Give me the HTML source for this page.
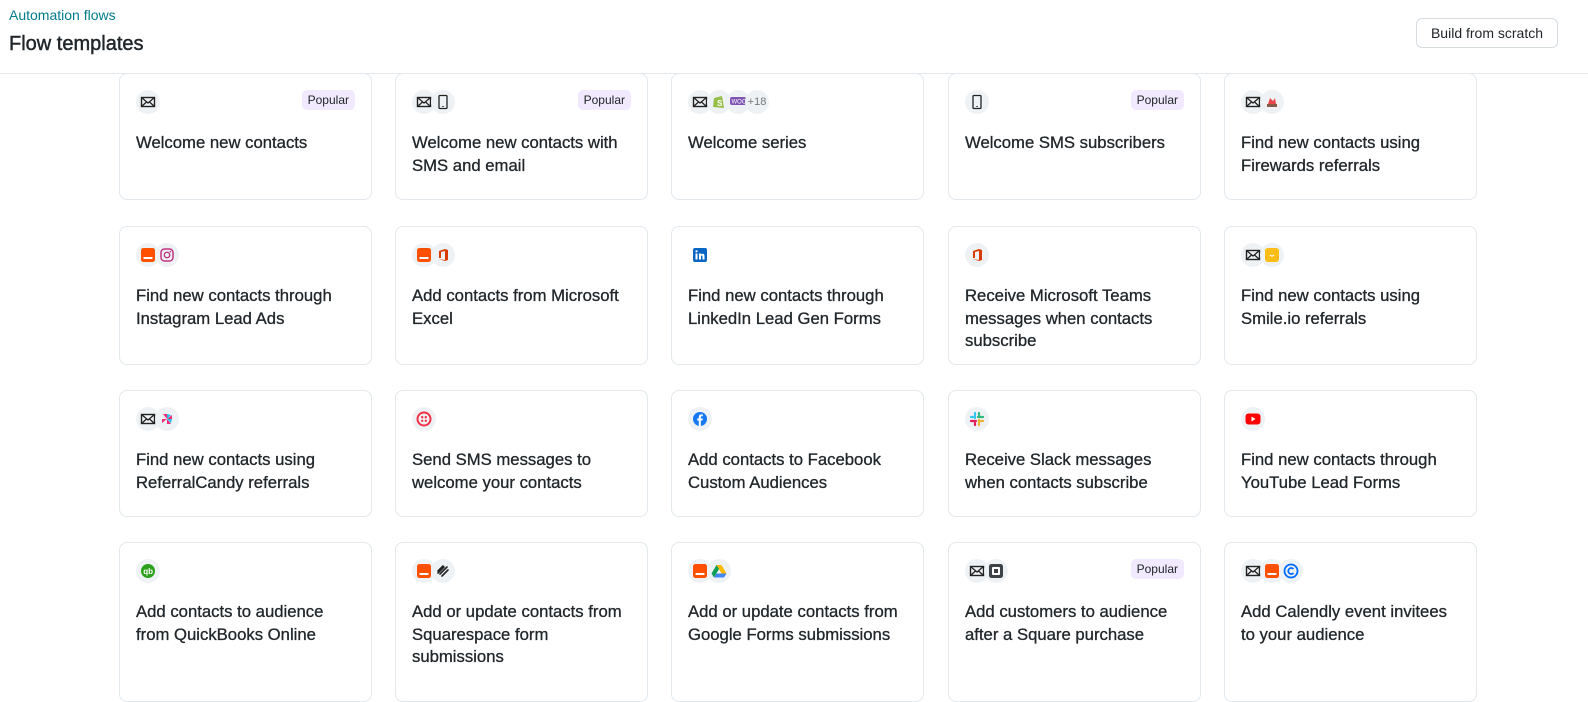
<!DOCTYPE html>
<html><head><meta charset="utf-8"><style>
*{box-sizing:border-box;margin:0;padding:0}
body{width:1588px;height:673px;overflow:hidden;background:#fff;font-family:"Liberation Sans",sans-serif;color:#21262a;position:relative}
.hdr{position:absolute;left:0;top:0;width:1588px;height:74px;border-bottom:1px solid #e3e8ec;background:#fff;z-index:2}
.crumb{position:absolute;left:9px;top:7px;font-size:14px;color:#007c89}
.h1{position:absolute;left:9px;top:33px;font-size:20px;-webkit-text-stroke:0.45px #21262a}
.btn{position:absolute;left:1416px;top:18px;width:142px;height:30px;border:1px solid #d6dce1;border-radius:6px;font-size:14px;line-height:28px;text-align:center}
.card{position:absolute;width:253px;border:1px solid #e3e8ec;border-radius:8px;background:#fff;padding:16px}
.icons{height:24px;display:flex}
.ic{width:24px;height:24px;border-radius:50%;background:#eff2f4;display:flex;align-items:center;justify-content:center;margin-right:-5px;font-size:11px;color:#777}
.pop{position:absolute;right:16px;top:16px;background:#f1e9fd;border-radius:5px;font-size:12px;padding:3px 6px;line-height:14px}
.t{margin-top:18px;font-size:16.7px;line-height:22.5px;width:221px;-webkit-text-stroke:0.3px #21262a}
</style></head><body>
<div class="hdr"><div class="crumb">Automation flows</div><div class="h1">Flow templates</div><div class="btn">Build from scratch</div></div>
<svg width="0" height="0" style="position:absolute"><defs>
<symbol id="m" viewBox="0 0 16 16"><rect x="1.5" y="3.5" width="13" height="9" fill="none" stroke="#222" stroke-width="1.4"/><path d="M1.5 3.5l6.5 5.5 6.5-5.5M1.5 12.5l5-4.5M14.5 12.5l-5-4.5" fill="none" stroke="#222" stroke-width="1.3"/></symbol>
<symbol id="p" viewBox="0 0 16 16"><rect x="4" y="1.5" width="8" height="13" rx="1" fill="none" stroke="#222" stroke-width="1.3"/><rect x="7.3" y="12" width="1.4" height="1" fill="#222"/></symbol>
<symbol id="f" viewBox="0 0 16 16"><rect x="1" y="1" width="14" height="14" rx="2.5" fill="#ff4f00"/><rect x="3.5" y="10" width="9" height="2" fill="#fff"/></symbol>
</defs></svg>

<!-- Row 1 -->
<div class="card" style="left:119px;top:73px;height:127px"><div class="icons"><div class="ic"><svg width="16" height="16"><use href="#m"/></svg></div></div><div class="pop">Popular</div><div class="t">Welcome new contacts</div></div>
<div class="card" style="left:395px;top:73px;height:127px"><div class="icons"><div class="ic"><svg width="16" height="16"><use href="#m"/></svg></div><div class="ic"><svg width="16" height="16"><use href="#p"/></svg></div></div><div class="pop">Popular</div><div class="t">Welcome new contacts with SMS and email</div></div>
<div class="card" style="left:671px;top:73px;height:127px"><div class="icons"><div class="ic"><svg width="16" height="16"><use href="#m"/></svg></div><div class="ic"><svg width="14" height="16" viewBox="0 0 14 16"><path d="M2 4l8-2 2 12-11-1z" fill="#95bf47"/><text x="5" y="12" font-size="8" fill="#fff" font-weight="bold">S</text></svg></div><div class="ic"><svg width="16" height="10" viewBox="0 0 16 10"><rect width="16" height="8" rx="2" fill="#7f54b3"/><text x="1.5" y="6.5" font-size="6" fill="#fff">WOO</text></svg></div><div class="ic">+18</div></div><div class="t">Welcome series</div></div>
<div class="card" style="left:948px;top:73px;height:127px"><div class="icons"><div class="ic"><svg width="16" height="16"><use href="#p"/></svg></div></div><div class="pop">Popular</div><div class="t">Welcome SMS subscribers</div></div>
<div class="card" style="left:1224px;top:73px;height:127px"><div class="icons"><div class="ic"><svg width="16" height="16"><use href="#m"/></svg></div><div class="ic"><svg width="14" height="14" viewBox="0 0 14 14"><path d="M3 9l2-6 3 3 2-3 1 6z" fill="#e8474e"/><rect x="2" y="9" width="10" height="3" fill="#8a5a44"/></svg></div></div><div class="t">Find new contacts using Firewards referrals</div></div>

<!-- Row 2 -->
<div class="card" style="left:119px;top:226px;height:139px"><div class="icons"><div class="ic"><svg width="16" height="16"><use href="#f"/></svg></div><div class="ic"><svg width="14" height="14" viewBox="0 0 14 14"><rect x="1" y="1" width="12" height="12" rx="3.5" fill="none" stroke="#c13584" stroke-width="1.5"/><circle cx="7" cy="7" r="2.7" fill="none" stroke="#c13584" stroke-width="1.4"/><circle cx="10.3" cy="3.7" r=".8" fill="#c13584"/></svg></div></div><div class="t">Find new contacts through Instagram Lead Ads</div></div>
<div class="card" style="left:395px;top:226px;height:139px"><div class="icons"><div class="ic"><svg width="16" height="16"><use href="#f"/></svg></div><div class="ic"><svg width="12" height="14" viewBox="0 0 12 14"><path d="M2 3l6-2 3 1v10l-3 1-6-2 6 1V3L4 4v6L2 10z" fill="#d83b01"/></svg></div></div><div class="t">Add contacts from Microsoft Excel</div></div>
<div class="card" style="left:671px;top:226px;height:139px"><div class="icons"><div class="ic" style="background:none"><svg width="16" height="16" viewBox="0 0 16 16"><rect x="1" y="1" width="14" height="14" rx="2" fill="#0a66c2"/><rect x="3.5" y="6.5" width="2" height="6" fill="#fff"/><circle cx="4.5" cy="4.3" r="1.1" fill="#fff"/><path d="M7 6.5h2v1c.6-1 3.5-1.5 3.5 1.5v3.5h-2v-3c0-1.5-1.5-1.3-1.5 0v3H7z" fill="#fff"/></svg></div></div><div class="t">Find new contacts through LinkedIn Lead Gen Forms</div></div>
<div class="card" style="left:948px;top:226px;height:139px"><div class="icons"><div class="ic"><svg width="12" height="14" viewBox="0 0 12 14"><path d="M2 3l6-2 3 1v10l-3 1-6-2 6 1V3L4 4v6L2 10z" fill="#d83b01"/></svg></div></div><div class="t">Receive Microsoft Teams messages when contacts subscribe</div></div>
<div class="card" style="left:1224px;top:226px;height:139px"><div class="icons"><div class="ic"><svg width="16" height="16"><use href="#m"/></svg></div><div class="ic"><svg width="16" height="16" viewBox="0 0 16 16"><rect x="1" y="1" width="14" height="14" rx="3" fill="#fbbd16"/><path d="M6 8q2 2 4 0" fill="none" stroke="#fff" stroke-width="1.2"/></svg></div></div><div class="t">Find new contacts using Smile.io referrals</div></div>

<!-- Row 3 -->
<div class="card" style="left:119px;top:390px;height:127px"><div class="icons"><div class="ic"><svg width="16" height="16"><use href="#m"/></svg></div><div class="ic"><svg width="14" height="14" viewBox="0 0 14 14"><path d="M7 7L3 2h4zM7 7l5-4v4zM7 7l4 5H7zM7 7l-5 4V7z" fill="#ee2b7b"/><path d="M7 7V2l4 1zM7 7h5l-1 4z" fill="#28c0e8"/></svg></div></div><div class="t">Find new contacts using ReferralCandy referrals</div></div>
<div class="card" style="left:395px;top:390px;height:127px"><div class="icons"><div class="ic"><svg width="16" height="16" viewBox="0 0 16 16"><circle cx="8" cy="8" r="6.5" fill="none" stroke="#f22f46" stroke-width="2"/><circle cx="6.2" cy="6.2" r="1.2" fill="#f22f46"/><circle cx="9.8" cy="6.2" r="1.2" fill="#f22f46"/><circle cx="6.2" cy="9.8" r="1.2" fill="#f22f46"/><circle cx="9.8" cy="9.8" r="1.2" fill="#f22f46"/></svg></div></div><div class="t">Send SMS messages to welcome your contacts</div></div>
<div class="card" style="left:671px;top:390px;height:127px"><div class="icons"><div class="ic"><svg width="16" height="16" viewBox="0 0 16 16"><circle cx="8" cy="8" r="7" fill="#1877f2"/><path d="M8.8 15V9.5h1.7l.3-2H8.8V6.3c0-.6.2-1 1-1h1V3.5c-.3 0-1-.1-1.6-.1-1.5 0-2.4.9-2.4 2.5v1.6H5.2v2h1.6V15z" fill="#fff"/></svg></div></div><div class="t">Add contacts to Facebook Custom Audiences</div></div>
<div class="card" style="left:948px;top:390px;height:127px"><div class="icons"><div class="ic"><svg width="16" height="16" viewBox="0 0 16 16"><g stroke-linecap="round" stroke-width="2.2"><path d="M6 2v5" stroke="#36c5f0"/><path d="M2 10h5" stroke="#e01e5a"/><path d="M10 14V9" stroke="#ecb22e"/><path d="M14 6H9" stroke="#2eb67d"/><path d="M2 6h2" stroke="#36c5f0"/><path d="M6 14v-2" stroke="#e01e5a"/><path d="M14 10h-2" stroke="#ecb22e"/><path d="M10 2v2" stroke="#2eb67d"/></g></svg></div></div><div class="t">Receive Slack messages when contacts subscribe</div></div>
<div class="card" style="left:1224px;top:390px;height:127px"><div class="icons"><div class="ic"><svg width="16" height="12" viewBox="0 0 16 12"><rect x="0.5" y="0.5" width="15" height="11" rx="3" fill="#f00"/><path d="M6.5 3.5v5l4-2.5z" fill="#fff"/></svg></div></div><div class="t">Find new contacts through YouTube Lead Forms</div></div>

<!-- Row 4 -->
<div class="card" style="left:119px;top:542px;height:160px"><div class="icons"><div class="ic"><svg width="16" height="16" viewBox="0 0 16 16"><circle cx="8" cy="8" r="7" fill="#2ca01c"/><text x="3.2" y="11" font-size="8" fill="#fff" font-weight="bold">qb</text></svg></div></div><div class="t">Add contacts to audience from QuickBooks Online</div></div>
<div class="card" style="left:395px;top:542px;height:160px"><div class="icons"><div class="ic"><svg width="16" height="16"><use href="#f"/></svg></div><div class="ic"><svg width="16" height="16" viewBox="0 0 16 16"><path d="M3 8l5-5M5 11l7-7M7 13l6-6M3 10l6-6" stroke="#222" stroke-width="1.6" stroke-linecap="round" fill="none"/></svg></div></div><div class="t">Add or update contacts from Squarespace form submissions</div></div>
<div class="card" style="left:671px;top:542px;height:160px"><div class="icons"><div class="ic"><svg width="16" height="16"><use href="#f"/></svg></div><div class="ic"><svg width="16" height="14" viewBox="0 0 16 14"><path d="M5.5 1h5l5 8.5h-5z" fill="#ffba00"/><path d="M5.5 1L0.5 9.5 3 13.5 8 5z" fill="#0f9d58"/><path d="M3 13.5h10l2.5-4h-10z" fill="#4285f4"/></svg></div></div><div class="t">Add or update contacts from Google Forms submissions</div></div>
<div class="card" style="left:948px;top:542px;height:160px"><div class="icons"><div class="ic"><svg width="16" height="16"><use href="#m"/></svg></div><div class="ic"><svg width="16" height="16" viewBox="0 0 16 16"><rect x="1" y="1" width="14" height="14" rx="2.5" fill="#3e4348"/><rect x="4" y="4" width="8" height="8" rx="1" fill="#fff"/><rect x="6" y="6" width="4" height="4" fill="#3e4348"/></svg></div></div><div class="pop">Popular</div><div class="t">Add customers to audience after a Square purchase</div></div>
<div class="card" style="left:1224px;top:542px;height:160px"><div class="icons"><div class="ic"><svg width="16" height="16"><use href="#m"/></svg></div><div class="ic"><svg width="16" height="16"><use href="#f"/></svg></div><div class="ic"><svg width="16" height="16" viewBox="0 0 16 16"><circle cx="8" cy="8" r="6.5" fill="none" stroke="#006bff" stroke-width="1.8"/><path d="M10.5 6a3 3 0 1 0 0 4" fill="none" stroke="#006bff" stroke-width="1.8"/></svg></div></div><div class="t">Add Calendly event invitees to your audience</div></div>
</body></html>
